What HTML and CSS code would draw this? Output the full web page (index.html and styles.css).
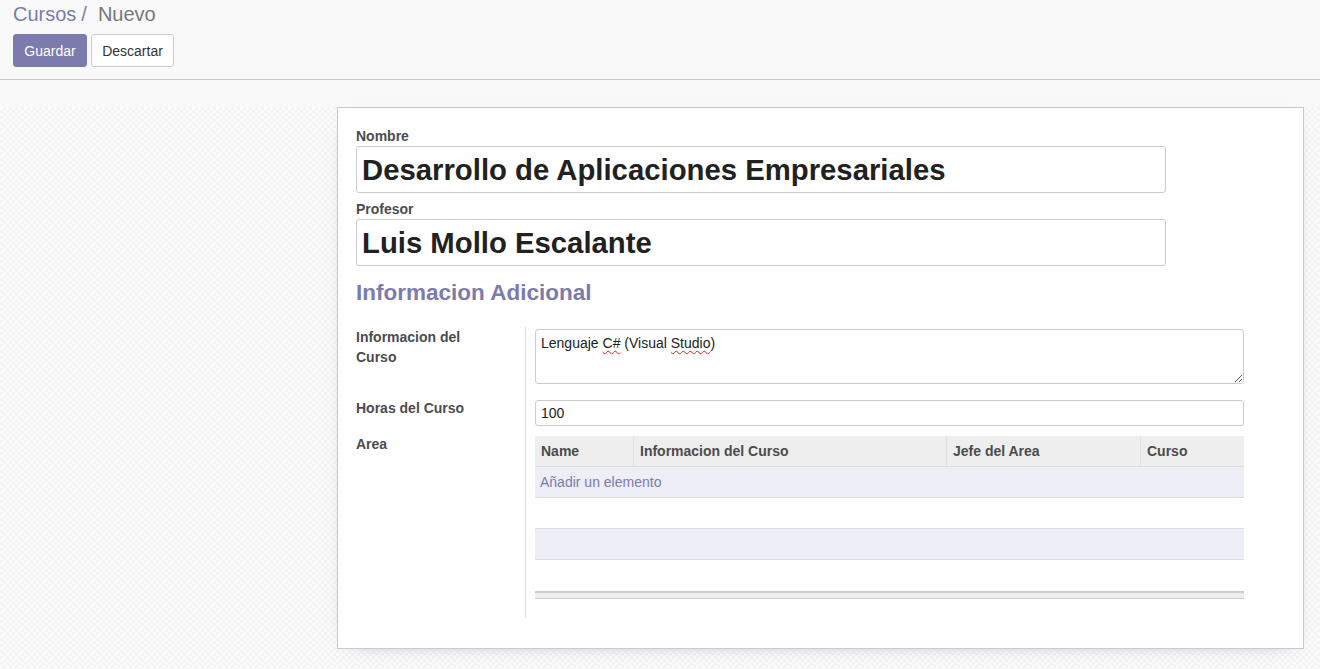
FILE: index.html
```html
<!DOCTYPE html>
<html lang="es">
<head>
<meta charset="utf-8">
<title>Cursos / Nuevo</title>
<link rel="stylesheet" href="styles.css">
</head>
<body>
<div class="cp">
  <div class="bc"><a class="bc-link">Cursos</a><span class="bc-sep">/</span><span class="bc-active">Nuevo</span></div>
  <div class="btns">
    <button class="btn btn-primary">Guardar</button>
    <button class="btn btn-secondary">Descartar</button>
  </div>
</div>
<div class="form-top"></div>
<div class="sheet-bg">
  <div class="sheet">
    <div class="flabel">Nombre</div>
    <div class="big-input">Desarrollo de Aplicaciones Empresariales</div>
    <div class="flabel second">Profesor</div>
    <div class="big-input">Luis Mollo Escalante</div>
    <h2 class="sep-title">Informacion Adicional</h2>
    <div class="group">
      <div class="glabel">Informacion del Curso</div>
      <div class="gfield row1"><div class="textarea">Lenguaje <span class="spell">C#</span> (Visual <span class="spell">Studio</span>)</div></div>
      <div class="glabel">Horas del Curso</div>
      <div class="gfield row2"><div class="input">100</div></div>
      <div class="glabel">Area</div>
      <div class="gfield row3">
        <div class="list">
          <div class="lrow lhead">
            <div class="lcell">Name</div>
            <div class="lcell">Informacion del Curso</div>
            <div class="lcell">Jefe del Area</div>
            <div class="lcell">Curso</div>
          </div>
          <div class="lrow odd"><div class="add">Añadir un elemento</div></div>
          <div class="lrow"></div>
          <div class="lrow odd"></div>
          <div class="lrow last"></div>
          <div class="lfoot"></div>
        </div>
      </div>
    </div>
  </div>
</div>
</body>
</html>
```
FILE: styles.css
```css
* { box-sizing: border-box; }
html, body {
  margin: 0;
  padding: 0;
  background: #f9f9f9;
  font-family: "Liberation Sans", Arial, sans-serif;
  font-size: 14px;
  color: #4c4c4c;
}
.cp {
  height: 80px;
  padding: 0 13px;
  background: #f9f9f9;
  border-bottom: 1px solid #cccccc;
}
.bc {
  font-size: 20px;
  line-height: 28px;
  height: 30px;
  white-space: nowrap;
}
.bc-link { color: #7c7bad; }
.bc-sep { color: #7c7bad; margin: 0 11px 0 5px; }
.bc-active { color: #777777; }
.btns {
  display: flex;
  gap: 4px;
  margin-top: 4px;
}
.btn {
  height: 33px;
  font-family: "Liberation Sans", Arial, sans-serif;
  font-size: 14px;
  border-radius: 3px;
  padding: 0;
  cursor: pointer;
  text-align: center;
}
.btn-primary {
  width: 74px;
  background: #7c7bad;
  border: 1px solid #7c7bad;
  color: #ffffff;
}
.btn-secondary {
  width: 83px;
  background: #ffffff;
  border: 1px solid #cccccc;
  color: #333333;
}
.form-top {
  height: 27px;
  background: #f9f9f9;
}
.sheet-bg {
  background: repeating-conic-gradient(#f4f4f4 0 25%, #fcfcfc 0 50%) 0 0 / 6px 6px;
  padding: 0 16px 20px 337px;
  min-height: 562px;
}
.sheet {
  width: 967px;
  height: 542px;
  background: #ffffff;
  border: 1px solid #c8c8d3;
  box-shadow: 0 5px 20px -15px rgba(0, 0, 0, 0.5);
  padding: 18px 18px 30px;
}
.flabel {
  font-weight: bold;
  font-size: 14px;
  line-height: 20px;
  color: #4c4c4c;
}
.flabel.second { margin-top: 6px; }
.big-input {
  width: 810px;
  height: 47px;
  border: 1px solid #cccccc;
  border-radius: 3px;
  padding: 0 5px;
  font-size: 29.3px;
  line-height: 45px;
  font-weight: bold;
  color: #212121;
  white-space: nowrap;
}
.sep-title {
  margin: 14px 0 21px;
  font-size: 22.5px;
  line-height: 26px;
  font-weight: bold;
  color: #7c7bad;
}
.group {
  display: grid;
  grid-template-columns: 170px 718px;
}
.glabel {
  border-right: 1px solid #dddddd;
  padding: 0 40px 0 0;
  font-weight: bold;
  line-height: 20px;
  color: #4c4c4c;
}
.gfield { padding: 2px 0 0 9px; }
.gfield.row1 { padding-bottom: 14px; }
.gfield.row2 { padding-bottom: 8px; }
.gfield.row3 { padding-bottom: 19px; }
.textarea {
  width: 709px;
  height: 55px;
  border: 1px solid #cccccc;
  border-radius: 3px;
  padding: 3px 5px;
  line-height: 20px;
  color: #222222;
  overflow: auto;
  resize: vertical;
}
.spell {
  text-decoration: underline wavy #e02020;
  text-decoration-thickness: 1px;
  text-underline-offset: 2px;
}
.input {
  width: 709px;
  height: 26px;
  border: 1px solid #cccccc;
  border-radius: 3px;
  padding: 0 5px;
  line-height: 24px;
  color: #222222;
}
.list { width: 709px; }
.lrow {
  display: grid;
  grid-template-columns: 98px 313px 194px 104px;
  height: 31px;
  border-bottom: 1px solid #dddddd;
  background: #ffffff;
}
.lrow.odd { background: #eeeef6; }
.lrow.last { border-bottom: none; }
.lhead { background: #eeeeee; }
.lcell {
  font-weight: bold;
  line-height: 30px;
  padding-left: 6px;
  color: #4c4c4c;
  white-space: nowrap;
}
.lcell + .lcell { border-left: 1px solid #e2e2e2; }
.add {
  grid-column: 1 / -1;
  line-height: 31px;
  padding-left: 5px;
  color: #7c7bad;
}
.lfoot {
  height: 8px;
  background: #eeeeee;
  border-top: 2px solid #cccccc;
  border-bottom: 1px solid #cccccc;
}
```
